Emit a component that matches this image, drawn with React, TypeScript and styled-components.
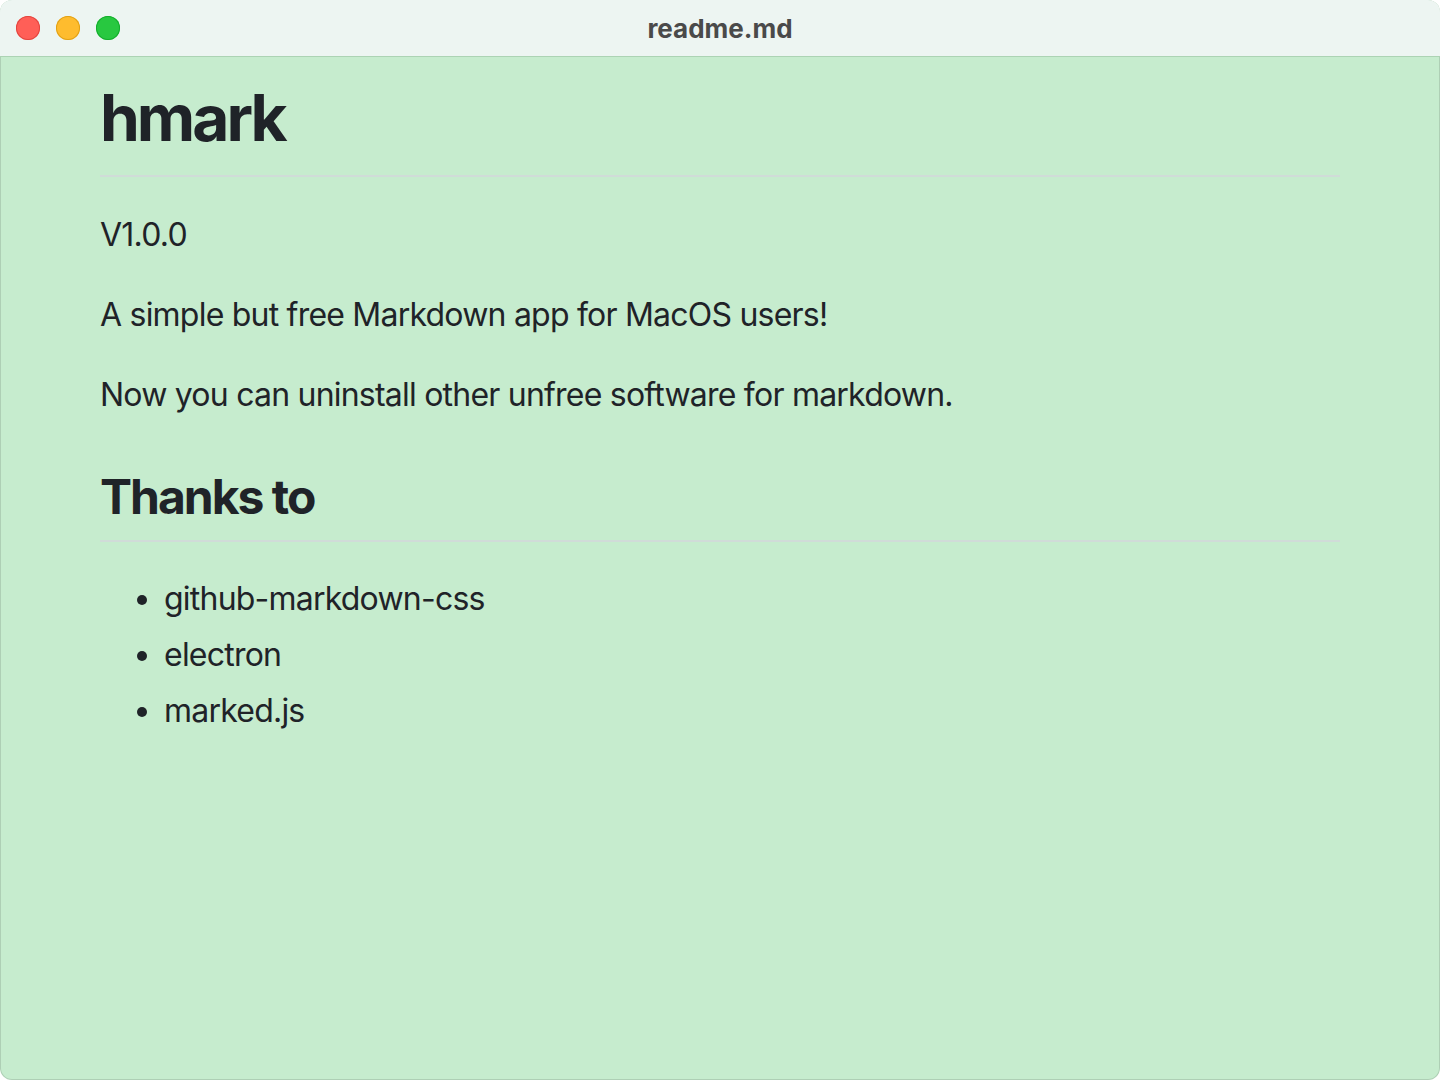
import React from "react";
import styled, { createGlobalStyle } from "styled-components";

const Global = createGlobalStyle`
  html, body { margin: 0; padding: 0; background: #ffffff; }
  body { font-family: Inter, "Noto Sans", sans-serif; }
`;

const Window = styled.div`
  width: 1440px;
  height: 1080px;
  box-sizing: border-box;
  border-radius: 12px;
  overflow: hidden;
  background: #c6ecce;
  display: flex;
  flex-direction: column;
  box-shadow: inset 0 0 0 1px rgba(0, 0, 0, 0.12);
`;

const TitleBar = styled.div`
  height: 56px;
  flex: none;
  background: #edf5f2;
  border-bottom: 1px solid #acd3b4;
  display: flex;
  align-items: center;
  position: relative;
  padding-left: 16px;
  gap: 16px;
`;

const Light = styled.span<{ $c: string; $b: string }>`
  width: 24px;
  height: 24px;
  border-radius: 50%;
  background: ${(p) => p.$c};
  box-shadow: inset 0 0 0 1px ${(p) => p.$b};
`;

const Title = styled.div`
  position: absolute;
  left: 0;
  right: 0;
  text-align: center;
  font-family: Inter, "Noto Sans", sans-serif;
  font-weight: 700;
  font-size: 26px;
  color: #4a4a4a;
  pointer-events: none;
`;

const Body = styled.div`
  flex: 1;
  padding: 21px 100px 0;
  color: #1f2328;
  font-family: Inter, "Noto Sans", sans-serif;
  font-size: 32px;
  line-height: 1.5;
  letter-spacing: -0.78px;
`;

const H1 = styled.h1`
  margin: 0 0 34px;
  font-size: 64px;
  line-height: 1.25;
  font-weight: 700;
  letter-spacing: -3px;
  padding-bottom: 17px;
  border-bottom: 2px solid #d0dcd8;
`;

const H2 = styled.h2`
  margin: 48px 0 33px;
  font-size: 48px;
  line-height: 1.25;
  font-weight: 700;
  letter-spacing: -2px;
  padding-bottom: 13px;
  border-bottom: 2px solid #d0dcd8;
`;

const P = styled.p`
  margin: 0 0 32px;
`;

const List = styled.ul`
  margin: 0;
  padding-left: 64px;
  list-style: disc;
`;

const Item = styled.li`
  & + & {
    margin-top: 8px;
  }
`;

export default function App() {
  return (
    <>
      <Global />
      <Window>
        <TitleBar>
          <Light $c="#ff5f57" $b="#e2463f" />
          <Light $c="#febc2e" $b="#e1a116" />
          <Light $c="#28c840" $b="#14ae2c" />
          <Title>readme.md</Title>
        </TitleBar>
        <Body>
          <H1>hmark</H1>
          <P>V1.0.0</P>
          <P>A simple but free Markdown app for MacOS users!</P>
          <P>Now you can uninstall other unfree software for markdown.</P>
          <H2>Thanks to</H2>
          <List>
            <Item>github-markdown-css</Item>
            <Item>electron</Item>
            <Item>marked.js</Item>
          </List>
        </Body>
      </Window>
    </>
  );
}
